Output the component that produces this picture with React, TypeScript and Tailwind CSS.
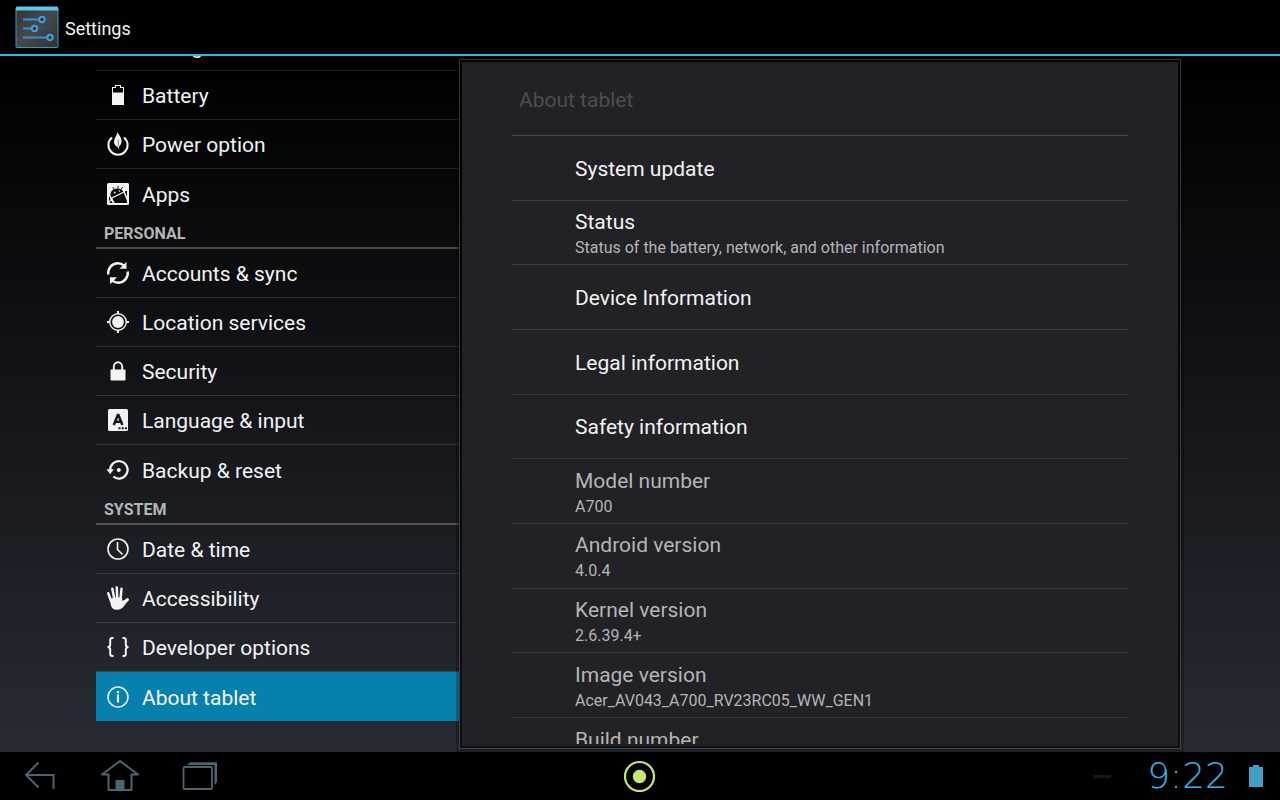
import type { ReactNode } from "react";

type NavItem = { label: string; icon: ReactNode; active?: boolean };
type Preference = { title: string; summary?: string; readOnly?: boolean };

function Icon({ children }: { children?: ReactNode }) {
  return (
    <svg viewBox="0 0 24 24" className="h-6 w-6 shrink-0" fill="currentColor" aria-hidden="true">
      {children}
    </svg>
  );
}

const deviceItems: NavItem[] = [
  { label: "Storage", icon: <Icon /> },
  {
    label: "Battery",
    icon: (
      <Icon>
        <path
          fillRule="evenodd"
          d="M9 2h6v2h3v18H6V4h3V2Zm1 1v2H7v4.500h10V5h-3V3h-4Z"
        />
      </Icon>
    ),
  },
  {
    label: "Power option",
    icon: (
      <Icon>
        <path
          d="M5.500 6a9.600 9.600 0 1 0 13 0"
          fill="none"
          stroke="currentColor"
          strokeWidth="2"
          strokeLinecap="round"
        />
        <path d="M11.500 0c1 3.200 4.300 5.200 4.100 9.300-.1 2.700-1.300 4.200-2.700 5.400l.4 3-1.600-2.700C9.300 13.800 7.700 12 8 9.200 8.200 6 10.700 4 11.500 0Z" />
        <path d="M12.300 7.500v6.500" stroke="#06080a" strokeWidth=".5" />
      </Icon>
    ),
  },
  {
    label: "Apps",
    icon: (
      <Icon>
        <rect x="1" y="1" width="22" height="22" rx="1.500" />
        <g fill="#08090b">
          <path d="M4.500 13.700c-.6-4.300 2.700-7.200 6.700-7.200 3 0 5 1.200 6 3.200L5.500 15.500l-1-1.800Z" />
          <path d="m6.300 16.500 11.400-5.700 3.300 8.200V21H8.800l-2.500-4.500Z" />
          <path d="m3 14 1.500 3L3 19.500V14ZM5 18.500 6.800 21H3.500L5 18.500ZM18.800 9.500l2.200-.7v6l-2.200-5.300Z" />
          <path d="m8.200 7.500-1.300-2.300M12 6.500V4M15 7.500l1.600-2.300" stroke="#08090b" strokeWidth="1" />
        </g>
        <circle cx="8.700" cy="10.500" r=".9" />
        <circle cx="13.300" cy="9" r=".8" />
      </Icon>
    ),
  },
];

const personalItems: NavItem[] = [
  {
    label: "Accounts & sync",
    icon: (
      <Icon>
        <g fill="none" stroke="currentColor" strokeWidth="2.400">
          <path d="M2.300 13.500C1.500 7.500 6 2.300 11.800 2.300c2.600 0 4.800.9 6.500 2.500" />
          <path d="M21.700 10.500c.9 6-3.700 11.200-9.500 11.200-2.600 0-4.800-.9-6.500-2.500" />
        </g>
        <path d="M20.500.8v7h-7l7-7ZM4 23.200v-7h7l-7 7Z" />
      </Icon>
    ),
  },
  {
    label: "Location services",
    icon: (
      <Icon>
        <circle cx="12" cy="12" r="8.300" fill="none" stroke="currentColor" strokeWidth="1.400" />
        <circle cx="12" cy="12" r="5.900" />
        <path d="M11 1h2v3h-2zM11 20h2v3h-2zM1 11h3v2H1zM20 11h3v2h-3z" />
      </Icon>
    ),
  },
  {
    label: "Security",
    icon: (
      <Icon>
        <rect x="4.500" y="10.500" width="15" height="11" rx=".8" />
        <path d="M7.800 11V7.800a4.200 4.600 0 0 1 8.400 0V11" fill="none" stroke="currentColor" strokeWidth="1.900" />
      </Icon>
    ),
  },
  {
    label: "Language & input",
    icon: (
      <Icon>
        <rect x="2" y="1" width="20" height="22" rx="1.500" />
        <path
          d="m7.800 17 4-10h.6l4 10M9.200 13.700h5.800"
          fill="none"
          stroke="#15181c"
          strokeWidth="2.500"
        />
        <path d="M12.500 19.300h2v2h-2zM15.700 19.300h2v2h-2zM18.900 19.300h2v2h-2z" fill="#15181c" />
      </Icon>
    ),
  },
  {
    label: "Backup & reset",
    icon: (
      <Icon>
        <path
          d="M4.200 12.500A8.700 8.700 0 1 1 7.300 18.500"
          fill="none"
          stroke="currentColor"
          strokeWidth="2.200"
        />
        <path d="M.5 11.300h7.300l-3.600 4.900L.5 11.300Z" />
        <circle cx="12.800" cy="12" r="2" />
      </Icon>
    ),
  },
];

const systemItems: NavItem[] = [
  {
    label: "Date & time",
    icon: (
      <Icon>
        <g fill="none" stroke="currentColor" strokeWidth="1.600">
          <circle cx="12" cy="12" r="10" />
          <path d="M11.500 5v7.500l5 5" />
        </g>
      </Icon>
    ),
  },
  {
    label: "Accessibility",
    icon: (
      <Icon>
        <g fill="none" stroke="currentColor" strokeLinecap="round" strokeWidth="2.500">
          <path d="M2.300 7.300 5 15M6.300 2.800l2 10M10.800 1.400l.4 11M15.500 2.800l-1 10" />
          <path d="m21.500 13.700-5.500 5" strokeWidth="3" />
        </g>
        <path d="M3.800 13 8 11.500h7.800l.7 3.500 3-1.500 2 1.500-3.800 5.500c-1.500 2-3.200 3.200-6.700 3.200-4.200 0-5.500-2.200-6.200-5L3.800 13Z" />
      </Icon>
    ),
  },
  {
    label: "Developer options",
    icon: (
      <Icon>
        <path
          d="M7.500 3H6.300C4.800 3 4.200 3.600 4.200 5v4.500c0 1.600-.6 2.500-2.700 2.500 2.100 0 2.700.9 2.700 2.500V19c0 1.400.6 2 2.100 2h1.200M16.500 3h1.200c1.500 0 2.100.6 2.100 2v4.500c0 1.600.6 2.500 2.700 2.500-2.100 0-2.700.9-2.700 2.500V19c0 1.400-.6 2-2.100 2h-1.200"
          fill="none"
          stroke="currentColor"
          strokeWidth="2"
        />
      </Icon>
    ),
  },
  {
    label: "About tablet",
    active: true,
    icon: (
      <Icon>
        <circle cx="12" cy="12" r="10" fill="none" stroke="currentColor" strokeWidth="1.500" />
        <path d="M10.900 6h2.200v2.200h-2.200zM10.900 9.600h2.200v7.800h-2.200z" />
      </Icon>
    ),
  },
];

const preferences: Preference[] = [
  { title: "System update" },
  { title: "Status", summary: "Status of the battery, network, and other information" },
  { title: "Device Information" },
  { title: "Legal information" },
  { title: "Safety information" },
  { title: "Model number", summary: "A700", readOnly: true },
  { title: "Android version", summary: "4.0.4", readOnly: true },
  { title: "Kernel version", summary: "2.6.39.4+", readOnly: true },
  { title: "Image version", summary: "Acer_AV043_A700_RV23RC05_WW_GEN1", readOnly: true },
];

function NavList({ items }: { items: NavItem[] }) {
  return (
    <ul>
      {items.map((item, index) => (
        <li key={item.label}>
          <a
            href="#"
            aria-current={item.active ? "page" : undefined}
            className={`flex h-[49px] items-center gap-3 pl-[10px] text-[21px] ${
              item.active ? "bg-[#0780ad]" : ""
            } ${index < items.length - 1 ? "border-b border-white/12" : ""}`}
          >
            {item.icon}
            <span className="pt-1">{item.label}</span>
          </a>
        </li>
      ))}
    </ul>
  );
}

function SectionHeader({ children }: { children: ReactNode }) {
  return (
    <h2 className="flex h-[31px] items-center border-b-2 border-white/25 pt-[3px] pl-2 text-base font-bold text-[#b4b5b6]">
      {children}
    </h2>
  );
}

function PreferenceRow({ title, summary, readOnly }: Preference) {
  const layout = `flex h-full w-full flex-col justify-center pl-[63px] text-left ${summary ? "pt-[5px]" : "pt-[2px]"}`;
  const content = (
    <>
      <span className={`block text-[21px] leading-[26px] ${readOnly ? "text-[#b5b5b6]" : "text-[#f3f3f3]"}`}>
        {title}
      </span>
      {summary && <span className="block text-base leading-[26px] text-[#b5b5b6]">{summary}</span>}
    </>
  );

  return (
    <li className="border-b border-[#3a3a3e]">
      {readOnly ? (
        <div className={layout}>{content}</div>
      ) : (
        <button type="button" className={layout}>
          {content}
        </button>
      )}
    </li>
  );
}

function SettingsLogo() {
  return (
    <svg viewBox="0 0 44 44" className="h-11 w-11" fill="none" aria-hidden="true">
      <defs>
        <linearGradient id="logo-bg" x1="0" y1="0" x2="1" y2="1">
          <stop offset="0" stopColor="#343434" />
          <stop offset="0.5" stopColor="#484848" />
          <stop offset="1" stopColor="#303030" />
        </linearGradient>
      </defs>
      <rect x="1" y="1.500" width="42" height="40" rx="1" fill="url(#logo-bg)" stroke="#2d9ad0" />
      <path d="M1.500 .5h41l1 4H.5l1-4Z" fill="#5cc8f2" />
      <g stroke="#22547a" strokeWidth="1.500">
        <path d="M8 13.500h29M8 22.500h29" />
      </g>
      <g stroke="#2f94d6" strokeWidth="1.800">
        <path d="M8 13.500h16M8 22.500h9M8 31.500h24" />
      </g>
      <g stroke="#3ba2e0" strokeWidth="1.900" fill="#333">
        <circle cx="27" cy="13.500" r="2.700" />
        <circle cx="19.500" cy="22.500" r="2.700" />
        <circle cx="35" cy="31.500" r="2.700" />
      </g>
    </svg>
  );
}

function SystemBar() {
  return (
    <footer className="grid h-12 shrink-0 grid-cols-[1fr_auto_1fr] items-center bg-black">
      <div className="flex text-[#4d6472]">
        <button type="button" aria-label="Back" className="flex h-12 w-20 items-center justify-center">
          <svg viewBox="0 0 40 40" className="h-10 w-10" fill="none" stroke="currentColor" strokeWidth="2">
            <path d="M18.500 6.500 6 19l12.500 12.500M6 19h27.500v14" />
          </svg>
        </button>
        <button type="button" aria-label="Home" className="flex h-12 w-20 items-center justify-center">
          <svg viewBox="0 0 40 40" className="h-10 w-10" fill="none" stroke="currentColor" strokeWidth="2">
            <path d="M20 5 2 18.500h6.500V34h23V18.500H38L20 5Z" strokeLinejoin="round" />
            <path d="M16.500 34v-9h7v9" fill="currentColor" />
          </svg>
        </button>
        <button type="button" aria-label="Recent apps" className="flex h-12 w-20 items-center justify-center">
          <svg viewBox="0 0 40 40" className="h-10 w-10" fill="none" stroke="currentColor" strokeWidth="1.800">
            <rect x="3.500" y="11" width="28.500" height="22" rx="1" />
            <path d="m7 9 3.500-2.800H37V26l-2.500 3V9H7Z" fill="currentColor" stroke="none" />
          </svg>
        </button>
      </div>
      <button type="button" aria-label="Acer Ring" className="flex h-12 w-12 items-center justify-center">
        <svg viewBox="0 0 32 32" className="h-8 w-8">
          <circle cx="15.500" cy="16.500" r="14.500" fill="none" stroke="#c4e873" strokeWidth="2.200" />
          <circle cx="15.500" cy="16.500" r="6.700" fill="#c4e873" />
        </svg>
      </button>
      <div className="flex items-center justify-end pr-[17px]">
        <span className="mr-9 h-[3px] w-[18px] bg-[#131718]" />
        <time className="mr-[21px] font-['DejaVu_Sans'] text-4xl leading-none font-extralight text-[#33b5e5]">
          9:22
        </time>
        <svg viewBox="0 0 14 22" className="h-[22px] w-[14px]" fill="#439fc6" aria-label="Battery level">
          <path d="M4 0h6v2h4v20H0V2h4V0Z" />
        </svg>
      </div>
    </footer>
  );
}

export default function App() {
  return (
    <div className="flex h-screen flex-col overflow-hidden bg-black font-['Roboto',sans-serif] text-[#f3f3f3]">
      <header className="flex h-14 shrink-0 items-center gap-[6px] border-b-2 border-[#33b5e5] pt-[2px] pl-[15px]">
        <SettingsLogo />
        <h1 className="pt-[2px] text-lg">Settings</h1>
      </header>

      <main className="flex min-h-0 flex-1 bg-linear-to-b/srgb from-black to-[#272b33] px-24">
        <nav className="w-[363px] shrink-0 overflow-hidden">
          {/* list is scrolled so the storage row is mostly out of view */}
          <div className="-mt-[34px]">
            <NavList items={deviceItems} />
            <SectionHeader>PERSONAL</SectionHeader>
            <NavList items={personalItems} />
            <SectionHeader>SYSTEM</SectionHeader>
            <NavList items={systemItems} />
          </div>
        </nav>

        <section className="my-[3px] mr-[3px] flex min-w-0 flex-1 border border-white/20 bg-black/60 p-[2px] shadow-[0_0_0_3px_rgba(0,0,0,0.25)]">
          <div className="flex-1 overflow-hidden border-b-2 border-[#212126] bg-[#212126] px-[50px]">
            <h2 className="flex h-[74px] items-center border-b border-[#4a4a4d] pt-1 pl-[7px] text-[21px] text-[#4c4c4f]">
              About tablet
            </h2>
            <ul className="grid min-h-[582px] auto-rows-fr">
              {preferences.map((preference) => (
                <PreferenceRow key={preference.title} {...preference} />
              ))}
            </ul>
            <p className="pt-[9px] pl-[63px] text-[21px] leading-[26px] text-[#b5b5b6]">Build number</p>
          </div>
        </section>
      </main>

      <SystemBar />
    </div>
  );
}
